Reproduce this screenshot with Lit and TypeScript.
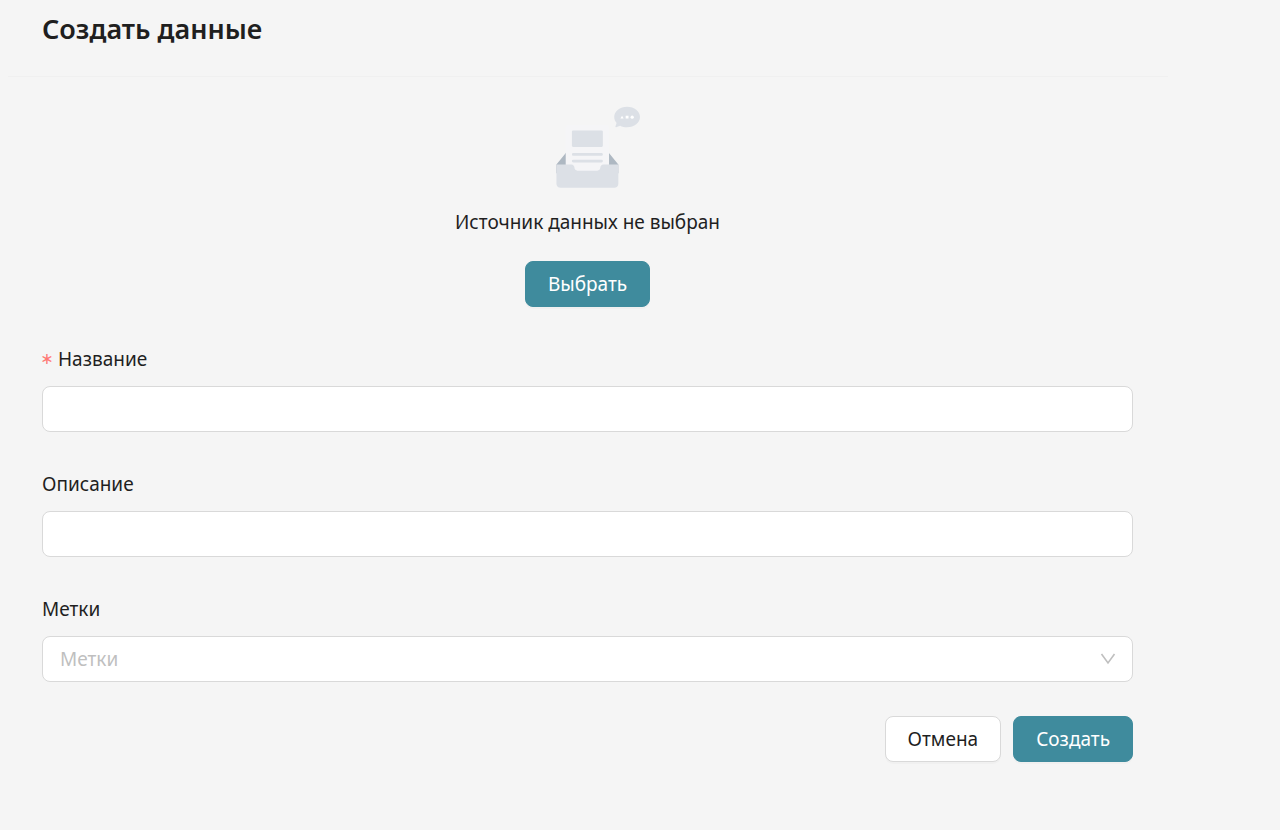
import { LitElement, html, css, svg } from "lit";
import { customElement, state } from "lit/decorators.js";

const emptyImage = html`
  <svg class="empty-image" viewBox="0 0 184 152" aria-hidden="true">
    ${svg`
    <g fill="none" fill-rule="evenodd">
      <g transform="translate(24 31.67)">
        <path fill="#aeb8c2" d="M122.034 69.674L98.109 40.229c-1.148-1.386-2.826-2.225-4.593-2.225h-51.44c-1.766 0-3.444.839-4.592 2.225L13.56 69.674v15.383h108.475V69.674z"/>
        <path fill="#f5f5f7" d="M33.83 0h67.933a4 4 0 0 1 4 4v93.344a4 4 0 0 1-4 4H33.83a4 4 0 0 1-4-4V4a4 4 0 0 1 4-4z"/>
        <path fill="#dce0e6" d="M42.678 9.953h50.237a2 2 0 0 1 2 2V36.91a2 2 0 0 1-2 2H42.678a2 2 0 0 1-2-2V11.953a2 2 0 0 1 2-2zM42.94 49.767h49.713a2.262 2.262 0 1 1 0 4.524H42.94a2.262 2.262 0 0 1 0-4.524zM42.94 61.53h49.713a2.262 2.262 0 1 1 0 4.525H42.94a2.262 2.262 0 0 1 0-4.525zM121.813 105.032c-.775 3.071-3.497 5.36-6.735 5.36H20.515c-3.238 0-5.96-2.29-6.734-5.36a7.309 7.309 0 0 1-.222-1.79V69.675h26.318c2.907 0 5.25 2.448 5.25 5.42v.04c0 2.971 2.37 5.37 5.277 5.37h34.785c2.907 0 5.277-2.421 5.277-5.393V75.1c0-2.972 2.343-5.426 5.25-5.426h26.318v33.569c0 .617-.077 1.216-.221 1.789z"/>
      </g>
      <path fill="#dce0e6" d="M149.121 33.292l-6.83 2.65a1 1 0 0 1-1.317-1.23l1.937-6.207c-2.589-2.944-4.109-6.534-4.109-10.408C138.802 8.102 148.92 0 161.402 0 173.881 0 184 8.102 184 18.097c0 9.995-10.118 18.097-22.599 18.097-4.528 0-8.744-1.066-12.28-2.902z"/>
      <g transform="translate(149.65 15.383)" fill="#fff">
        <ellipse cx="20.654" cy="3.167" rx="2.849" ry="2.815"/>
        <path d="M5.698 5.63H0L2.898.704zM9.259.704h4.985V5.63H9.259z"/>
      </g>
    </g>`}
  </svg>
`;

@customElement("app-root")
export class AppRoot extends LitElement {
  static styles = css`
    :host {
      display: block;
      box-sizing: border-box;
      min-height: 100vh;
      padding: 0 8px;
      background: #f5f5f5;
      color: #1f1f1f;
      font-family: "Segoe UI", "Noto Sans", sans-serif;
      font-size: 19px;
      line-height: 32px;
    }
    .page {
      max-width: 1160px;
    }
    .header {
      padding: 9px 34px 27px;
      border-bottom: 1px solid #f0f0f0;
    }
    .title {
      margin: 0;
      font-size: 27px;
      font-weight: 600;
      line-height: 40px;
    }
    .form {
      display: flex;
      flex-direction: column;
      gap: 34px;
      padding: 29px 35px 34px 34px;
    }
    .source {
      display: flex;
      flex-direction: column;
      align-items: center;
    }
    .empty-image {
      display: block;
      width: 105px;
      height: 88px;
    }
    .source-text {
      margin: 12px 0 23px;
    }
    .field {
      display: flex;
      flex-direction: column;
      gap: 11px;
      padding-top: 2px;
    }
    .required {
      display: flex;
      align-items: center;
      gap: 6px;
    }
    .required::before {
      content: "∗";
      display: flex;
      justify-content: center;
      width: 10px;
      color: #ff7875;
      font-family: "DejaVu Sans", sans-serif;
      font-size: 16px;
    }
    .control {
      box-sizing: border-box;
      width: 100%;
      height: 46px;
      margin: 0;
      padding: 0 17px;
      border: 1px solid #d9d9d9;
      border-radius: 8px;
      background: #fff;
      color: inherit;
      font: inherit;
    }
    .control:focus-visible {
      border-color: #3f8b9d;
      outline: none;
    }
    .select-wrap {
      display: grid;
      align-items: center;
    }
    .select-wrap > * {
      grid-area: 1 / 1;
    }
    .select {
      appearance: none;
    }
    .select.unset {
      color: #bfbfbf;
    }
    .arrow {
      justify-self: end;
      width: 16px;
      height: 12px;
      margin-right: 17px;
      fill: none;
      stroke: #bfbfbf;
      stroke-width: 1.6;
      pointer-events: none;
    }
    .actions {
      display: flex;
      justify-content: flex-end;
      gap: 12px;
    }
    .button {
      box-sizing: border-box;
      height: 46px;
      padding: 0 22px;
      border: 1px solid #d9d9d9;
      border-radius: 8px;
      background: #fff;
      box-shadow: 0 2px 0 rgba(0, 0, 0, 0.02);
      color: inherit;
      font: inherit;
      cursor: pointer;
    }
    .button.primary {
      border-color: #3f8b9d;
      background: #3f8b9d;
      color: #fff;
    }
  `;

  @state() private tag = "";

  private onTagChange(event: Event) {
    this.tag = (event.target as HTMLSelectElement).value;
  }

  render() {
    return html`
      <main class="page">
        <header class="header">
          <h1 class="title">Создать данные</h1>
        </header>
        <form class="form" @submit=${(e: Event) => e.preventDefault()}>
          <section class="source">
            ${emptyImage}
            <p class="source-text">Источник данных не выбран</p>
            <button class="button primary" type="button">Выбрать</button>
          </section>
          <div class="field">
            <label class="required" for="name">Название</label>
            <input class="control" id="name" type="text" required />
          </div>
          <div class="field">
            <label for="description">Описание</label>
            <input class="control" id="description" type="text" />
          </div>
          <div class="field">
            <label for="tags">Метки</label>
            <div class="select-wrap">
              <select
                class="control select ${this.tag ? "" : "unset"}"
                id="tags"
                @change=${this.onTagChange}
              >
                <option value="" selected>Метки</option>
              </select>
              <svg class="arrow" viewBox="0 0 16 12" aria-hidden="true">
                <path d="M1.5 1L8 10L14.5 1" />
              </svg>
            </div>
          </div>
          <div class="actions">
            <button class="button" type="button">Отмена</button>
            <button class="button primary" type="submit">Создать</button>
          </div>
        </form>
      </main>
    `;
  }
}
